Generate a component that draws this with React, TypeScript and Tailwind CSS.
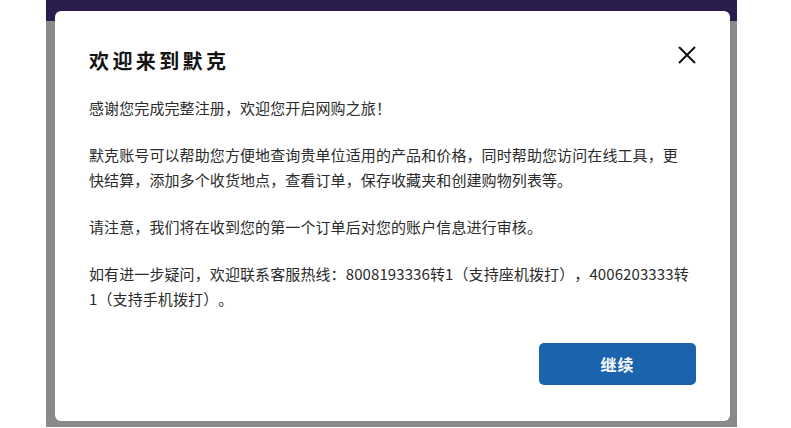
import React from "react";

export default function App() {
  const font = { fontFamily: '"Noto Sans CJK SC", "Noto Sans", sans-serif' };
  return (
    <div className="w-[791px] h-[428px] bg-white overflow-hidden" style={font}>
      <div className="ml-[46px] w-[691px] h-[427px] pt-[11px] pb-[6px] pl-[9px] pr-[7px] bg-[linear-gradient(#2a1c4c_21px,#8a8a8a_21px)] flex">
        <div className="flex-1 bg-white rounded-[6px] flex flex-col pt-[36px] pl-[34px] pr-[34px]">
          <div className="flex items-start justify-between h-[28px] shrink-0">
            <h1 className="text-[20px] leading-[28px] font-bold tracking-[3.4px] text-[#141414]">欢迎来到默克</h1>
            <svg width="20" height="20" viewBox="0 0 20 20" className="-mt-[2px] mr-[-1px]">
              <path d="M2 2 L18 18 M18 2 L2 18" stroke="#111" strokeWidth="2" fill="none" />
            </svg>
          </div>
          <div className="mt-[20px] text-[15px] leading-[25px] tracking-[0.1px] text-[#2b2b2b] flex flex-col gap-[22px] whitespace-nowrap shrink-0 [text-spacing-trim:space-all]">
            <p>感谢您完成完整注册，欢迎您开启网购之旅！</p>
            <p>默克账号可以帮助您方便地查询贵单位适用的产品和价格，同时帮助您访问在线工具，更<br />快结算，添加多个收货地点，查看订单，保存收藏夹和创建购物列表等。</p>
            <p>请注意，我们将在收到您的第一个订单后对您的账户信息进行审核。</p>
            <p>如有进一步疑问，欢迎联系客服热线：8008193336转1（支持座机拨打），4006203333转<br />1（支持手机拨打）。</p>
          </div>
          <button className="mt-auto mb-[36px] self-end shrink-0 w-[157px] h-[42px] rounded-[5px] bg-[#1c63ad] text-white text-[16px] font-bold tracking-[1px]">继续</button>
        </div>
      </div>
    </div>
  );
}
